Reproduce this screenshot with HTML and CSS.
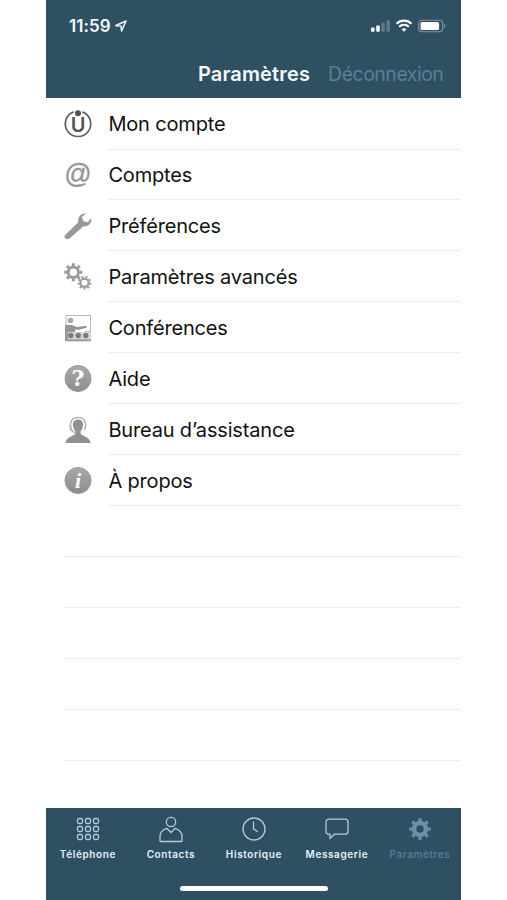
FILE: index.html
```
<!DOCTYPE html>
<html lang="fr">

<head>
    <meta charset="UTF-8">
    <meta name="viewport" content="width=device-width, initial-scale=1.0">
    <title>Paramètres</title>
    <link rel="stylesheet" href="styles.css">
</head>

<body>
    <div class="phone">
        <header class="header">
            <div class="status-bar">
                <span class="time">11:59</span>
                <svg class="location" width="12" height="12" viewBox="0 0 12 12">
                    <path d="M.8 5.6 11 1 6.6 11 6 6z" fill="none" stroke="#e8f1f6" stroke-width="1.6" stroke-linejoin="round"/>
                </svg>
                <svg class="signal" width="76" height="16" viewBox="0 0 76 16">
                    <g fill="#fff">
                        <rect x="1" y="9.5" width="3.6" height="4.2" rx="1"/>
                        <rect x="6.2" y="7.5" width="3.6" height="6.2" rx="1"/>
                        <rect x="11.4" y="4.8" width="3.4" height="8.9" rx="1" opacity=".25"/>
                        <rect x="16.4" y="2" width="3.4" height="11.7" rx="1" opacity=".25"/>
                        <path d="m34 13.7-2.4-2.5a3.6 3.6 0 0 1 4.8 0z"/>
                    </g>
                    <path d="M26.5 5.7a10.7 10.7 0 0 1 15 0M29.2 8.8a6.8 6.8 0 0 1 9.6 0" fill="none" stroke="#fff" stroke-width="2.1"/>
                    <rect x="48.6" y="2.3" width="24" height="11.4" rx="3.2" fill="none" stroke="#fff" stroke-opacity=".4" stroke-width="1.1"/>
                    <rect x="50.5" y="4.1" width="18.6" height="7.9" rx="1.6" fill="#fff"/>
                    <path d="M74 6v4c1.9-.7 1.9-3.3 0-4z" fill="#fff" opacity=".4"/>
                </svg>
            </div>
            <div class="title-bar">
                <h1>Paramètres</h1>
                <a class="logout">Déconnexion</a>
            </div>
        </header>

        <ul class="settings">
            <li>
                <svg class="icon" viewBox="0 0 28 28">
                    <path d="M9.6 1.9A12.7 12.7 0 1 0 18.4 1.9" fill="none" stroke="#606060" stroke-width="1.7"/>
                    <circle cx="14" cy="3.2" r="3" fill="#555"/>
                    <text class="logo-letter" x="14" y="22" text-anchor="middle">U</text>
                </svg>
                <span>Mon compte</span>
            </li>
            <li>
                <svg class="icon" viewBox="0 0 28 28">
                    <text class="at-sign" x="14" y="21.5" text-anchor="middle">@</text>
                </svg>
                <span>Comptes</span>
            </li>
            <li>
                <svg class="icon" viewBox="0 0 28 28">
                    <path d="M1 23.2 14.2 10.3C13.2 5.5 17 .8 21.9 1.2L18 5.1l1.3 4.1 4.4 1 3.5-4.1c1.2 5.4-3.5 9.2-8 8.3L5.5 26.5C2.7 28.3-.8 25.4 1 23.2z" fill="#999"/>
                </svg>
                <span>Préférences</span>
            </li>
            <li>
                <svg class="icon" viewBox="0 0 28 28" fill="none" stroke="#999">
                    <circle cx="9.3" cy="9.3" r="5.2" stroke-width="2.8"/>
                    <circle cx="9.3" cy="9.3" r="7.6" stroke-width="2.8" pathLength="16" stroke-dasharray="1 1" stroke-dashoffset=".5"/>
                    <circle cx="20.5" cy="19.8" r="4.1" stroke-width="2.1"/>
                    <circle cx="20.5" cy="19.8" r="5.9" stroke-width="2" pathLength="18" stroke-dasharray="1 1"/>
                </svg>
                <span>Paramètres avancés</span>
            </li>
            <li>
                <svg class="icon" viewBox="0 0 28 28">
                    <path d="M2 12V1.5h24.5v16H21" fill="none" stroke="#b8b8b8" stroke-width="1"/>
                    <circle cx="6.5" cy="6.5" r="2.8" fill="#aaa"/>
                    <path d="M1 11h7l5 2 9.5-1.3v2L15 15.8l-4-.3v3H1z" fill="#959595"/>
                    <path d="M1 18h26v8H1z" fill="#d8d8d8"/>
                    <path d="M1 17h3v9H1z" fill="#999"/>
                    <path d="M1 26.3h26" stroke="#999" stroke-width="2"/>
                    <g fill="#7c7c7c">
                        <circle cx="6.8" cy="21.5" r="2.7"/>
                        <circle cx="14.3" cy="21.5" r="2.7"/>
                        <circle cx="21.8" cy="21.5" r="2.7"/>
                    </g>
                </svg>
                <span>Conférences</span>
            </li>
            <li>
                <svg class="icon" viewBox="0 0 28 28">
                    <defs>
                        <linearGradient id="disc" x1="0" y1="0" x2="0" y2="1">
                            <stop offset="0" stop-color="#aaa"/>
                            <stop offset="1" stop-color="#8c8c8c"/>
                        </linearGradient>
                    </defs>
                    <circle cx="14" cy="13.5" r="13" fill="url(#disc)" stroke="#999"/>
                    <text class="help-mark" x="14" y="21.3" text-anchor="middle">?</text>
                </svg>
                <span>Aide</span>
            </li>
            <li>
                <svg class="icon" viewBox="0 0 28 28" fill="#909090">
                    <path d="M14 3.500c4 0 5.600 3 4.900 6.500-.4 2.300-1.200 3.900-2.300 5v2.500c0 2.200 9.400 3 9.900 9.500h-25c.5-6.500 9.900-7.300 9.900-9.500V15c-1.100-1.100-1.900-2.700-2.300-5-.7-3.500.9-6.500 4.900-6.500z"/>
                    <path d="M8 14C5 10 6 1.500 14 1.500S23 10 20 14" fill="none" stroke="#b5b5b5" stroke-width="1.6"/>
                    <path d="M6.5 8.500v5l4.500 3.300" fill="none" stroke="#b5b5b5" stroke-width="1.6"/>
                </svg>
                <span>Bureau d’assistance</span>
            </li>
            <li>
                <svg class="icon" viewBox="0 0 28 28">
                    <circle cx="14" cy="13.5" r="13" fill="url(#disc)" stroke="#999"/>
                    <text class="info-mark" x="14" y="21" text-anchor="middle">i</text>
                </svg>
                <span>À propos</span>
            </li>
        </ul>

        <div class="empty-rows">
            <div></div>
            <div></div>
            <div></div>
            <div></div>
            <div></div>
        </div>

        <footer class="footer">
            <nav class="tabs">
                <a>
                    <svg width="28" height="28" viewBox="0 0 28 28">
                        <rect x="3.5" y="3.5" width="5" height="5" rx="1.5"/>
                        <rect x="11.5" y="3.5" width="5" height="5" rx="1.5"/>
                        <rect x="19.5" y="3.5" width="5" height="5" rx="1.5"/>
                        <rect x="3.5" y="11.5" width="5" height="5" rx="1.5"/>
                        <rect x="11.5" y="11.5" width="5" height="5" rx="1.5"/>
                        <rect x="19.5" y="11.5" width="5" height="5" rx="1.5"/>
                        <rect x="3.5" y="19.5" width="5" height="5" rx="1.5"/>
                        <rect x="11.5" y="19.5" width="5" height="5" rx="1.5"/>
                        <rect x="19.5" y="19.5" width="5" height="5" rx="1.5"/>
                    </svg>
                    <span>Téléphone</span>
                </a>
                <a>
                    <svg width="28" height="28" viewBox="0 0 28 28">
                        <circle cx="14" cy="7" r="4.7"/>
                        <path d="M9.7 13.300 14 17.500l4.300-4.200c4.500 1.500 6.700 4 6.700 8.200v4.200q0 .8-.8.800H3.800q-.8 0-.8-.8v-4.200c0-4.200 2.200-6.700 6.700-8.200z"/>
                    </svg>
                    <span>Contacts</span>
                </a>
                <a>
                    <svg width="28" height="28" viewBox="0 0 28 28">
                        <circle cx="14" cy="14" r="11"/>
                        <path d="M13.5 6.500v7.300l4.300 3"/>
                    </svg>
                    <span>Historique</span>
                </a>
                <a>
                    <svg width="28" height="28" viewBox="0 0 28 28">
                        <path d="M6 4.200h16q3 0 3 3v9q0 3-3 3H11.500L7 23.300v-4.100H6q-3 0-3-3v-9q0-3 3-3z"/>
                    </svg>
                    <span>Messagerie</span>
                </a>
                <a class="active">
                    <svg width="28" height="28" viewBox="0 0 28 28">
                        <circle cx="14" cy="14" r="6" stroke-width="4.6"/>
                        <circle cx="14" cy="14" r="9.3" stroke-width="3" pathLength="16" stroke-dasharray=".9 1.1" stroke-dashoffset=".45"/>
                    </svg>
                    <span>Paramètres</span>
                </a>
            </nav>
            <div class="home-bar"></div>
        </footer>
    </div>
</body>

</html>
```

FILE: styles.css
```
* {
    box-sizing: border-box;
}

body {
    margin: 0;
    background-color: #fff;
    font-family: Inter, "Liberation Sans", sans-serif;
}

.phone {
    width: 415px;
    height: 900px;
    margin-left: 46.4px;
    display: flex;
    flex-direction: column;
}

.header {
    height: 98.4px;
    background-color: #2f4f63;
    color: #f2f9fd;
}

.status-bar {
    height: 50px;
    padding: 2px 15px 0 22.5px;
    display: flex;
    align-items: center;
}

.time {
    font-size: 17px;
    font-weight: 600;
    letter-spacing: 0.1px;
}

.location {
    margin-left: 4px;
}

.signal {
    margin-left: auto;
}

.title-bar {
    height: 47px;
    padding-right: 18px;
    display: flex;
    align-items: center;
    justify-content: flex-end;
    gap: 18px;
}

.title-bar h1 {
    margin: 0;
    font-size: 20px;
    font-weight: 600;
    letter-spacing: 0.15px;
}

.logout {
    font-size: 19.5px;
    color: #5d7f94;
    letter-spacing: -0.5px;
}

.settings {
    margin: 0;
    padding: 0.2px 0 0;
    list-style: none;
}

.settings li {
    height: 50.95px;
    padding-left: 17.5px;
    display: flex;
    align-items: center;
    gap: 16.5px;
    font-size: 20px;
    letter-spacing: -0.17px;
    color: #111;
}

.settings span {
    flex: 1;
    height: 100%;
    padding-top: 1px;
    display: flex;
    align-items: center;
    border-bottom: 1px solid #ececec;
    white-space: nowrap;
}

.icon {
    width: 28px;
    height: 28px;
    flex: none;
    overflow: visible;
}

.logo-letter {
    font-size: 20px;
    font-weight: 600;
    fill: #555;
    letter-spacing: 0;
}

.at-sign {
    font-family: "Liberation Sans", sans-serif;
    font-size: 27px;
    fill: #969696;
    stroke: #969696;
    stroke-width: 0.4px;
    letter-spacing: 0;
}

.help-mark,
.info-mark {
    font-family: "DejaVu Serif", serif;
    font-size: 22px;
    font-weight: bold;
    fill: #fff;
    letter-spacing: 0;
}

.info-mark {
    font-family: "Liberation Serif", serif;
    font-style: italic;
}

.empty-rows div {
    height: 50.95px;
    margin-left: 17.6px;
    border-bottom: 1px solid #ececec;
}

.footer {
    height: 92px;
    margin-top: auto;
    background-color: #2f4f63;
}

.tabs {
    height: 77.5px;
    padding-top: 7px;
    display: flex;
}

.tabs a {
    flex: 1;
    display: flex;
    flex-direction: column;
    align-items: center;
    font-size: 10px;
    font-weight: 600;
    line-height: 14px;
    letter-spacing: 0.6px;
    color: #e6f1f7;
}

.tabs svg {
    margin-bottom: 4px;
    fill: none;
    stroke: #b5cad6;
    stroke-width: 1.3;
}

.tabs .active {
    color: #5d7f94;
    font-weight: 500;
}

.tabs .active svg {
    stroke: #6b91a8;
}

.home-bar {
    width: 148px;
    height: 5.5px;
    margin: 0 auto;
    border-radius: 3px;
    background-color: #fff;
}
```
